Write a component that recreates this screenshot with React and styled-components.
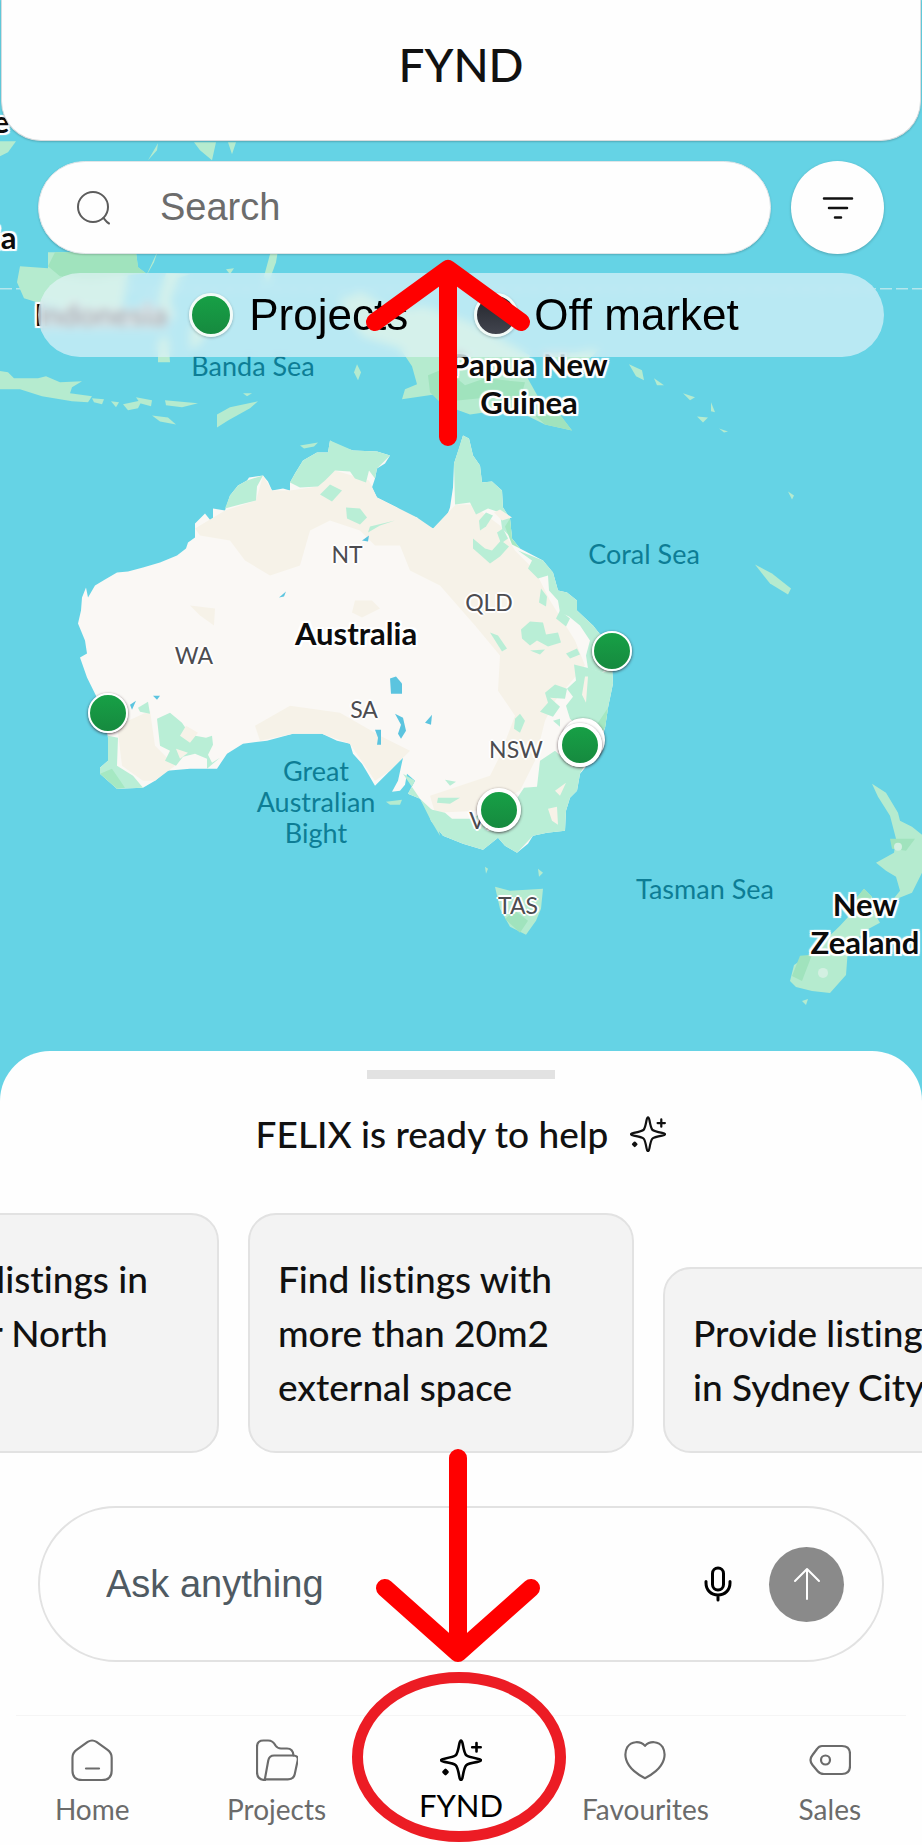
import React from 'react';
import styled, { createGlobalStyle } from 'styled-components';

const GlobalStyle = createGlobalStyle`
  *, *::before, *::after { box-sizing: border-box; }
  html, body { margin: 0; background: #fefefe; }
  body { font-family: Lato, "Open Sans", sans-serif; color: #111; font-variant-ligatures: none; }
  button, input { font: inherit; color: inherit; margin: 0; padding: 0; border: 0; background: none; }
  button { cursor: pointer; font-variant-ligatures: none; }
`;

const grotesque = '"Liberation Sans", Arial, sans-serif';

const Screen = styled.div`
  position: relative;
  display: flex;
  flex-direction: column;
  min-height: 100vh;
  overflow: hidden;
`;

const Stage = styled.section`
  position: relative;
  flex: 1 0 900px;
  background: #65d3e5;
`;

const MapCanvas = styled.div`
  position: absolute;
  inset: 0;
  overflow: hidden;
`;

const MapDrawing = styled.svg`
  display: block;
  width: 100%;
  height: 100%;
`;

const MAP_W = 922;
const MAP_H = 1100;
const pct = (n, total) => `${(n / total) * 100}%`;

const labelKinds = {
  country: `font-size: 31px; line-height: 38px; font-weight: 700; color: #0c0c0c;
    text-shadow: 2px 0 #fff, -2px 0 #fff, 0 2px #fff, 0 -2px #fff, 2px 2px 1px #fff, -2px 2px 1px #fff, 2px -2px 1px #fff, -2px -2px 1px #fff;`,
  region: `font-size: 23px; line-height: 28px; color: #4c4c50;
    text-shadow: 2px 0 #fff, -2px 0 #fff, 0 2px #fff, 0 -2px #fff, 0 0 3px #fff;`,
  sea: `font-size: 27px; line-height: 31px; color: #0d7d95;`,
};

const MapLabel = styled.span`
  position: absolute;
  left: ${(p) => pct(p.$x, MAP_W)};
  top: ${(p) => pct(p.$y, MAP_H)};
  transform: translate(-50%, -50%);
  white-space: pre;
  text-align: center;
  ${(p) => labelKinds[p.$kind]}
`;

const Pin = styled.button`
  position: absolute;
  left: ${(p) => pct(p.$x, MAP_W)};
  top: ${(p) => pct(p.$y, MAP_H)};
  width: ${(p) => (p.$stacked ? 44 : 40)}px;
  height: ${(p) => (p.$stacked ? 44 : 40)}px;
  transform: translate(-50%, -50%);
  border: ${(p) => (p.$stacked ? 4 : 2)}px solid #fff;
  border-radius: 50%;
  background: ${(p) => (p.$empty ? '#fff' : 'linear-gradient(#17a046, #168a3f)')};
  box-shadow: 0 1px 3px rgba(40, 20, 30, 0.75);
`;

const Overlay = styled.div`
  position: relative;
  display: flex;
  flex-direction: column;
`;

const Header = styled.header`
  margin: 0 1px;
  padding: 36px 0 47px;
  text-align: center;
  background: #fefefe;
  border: 1px solid #d8dcde;
  border-top: 0;
  border-radius: 0 0 40px 40px;
  box-shadow: 0 1px 2px rgba(0, 0, 0, 0.2);
`;

const PageTitle = styled.h1`
  margin: 0;
  font-size: 46px;
  line-height: 57px;
  font-weight: 500;
`;

const SearchRow = styled.form`
  display: flex;
  gap: 20px;
  margin: 20px 38px 0;
`;

const SearchBox = styled.label`
  flex: 1;
  min-width: 0;
  display: flex;
  align-items: center;
  gap: 48px;
  height: 93px;
  padding: 0 37px;
  border-radius: 47px;
  background: #fefefe;
  border: 1px solid #dfe5e8;
  box-shadow: 0 1px 2px rgba(0, 0, 0, 0.18);
`;

const TextInput = styled.input`
  flex: 1;
  min-width: 0;
  height: 60px;
  font-family: ${grotesque};
  font-size: 38px;
  outline: none;
  &::placeholder { color: ${(p) => p.$hint}; opacity: 1; }
`;

const FilterButton = styled.button`
  display: grid;
  place-items: center;
  width: 93px;
  height: 93px;
  border-radius: 50%;
  background: #fefefe;
  box-shadow: 0 1px 3px rgba(0, 0, 0, 0.22);
`;

const Legend = styled.div`
  display: flex;
  justify-content: center;
  align-items: center;
  gap: 66px;
  height: 84px;
  margin: 19px 38px 0;
  padding-left: 6px;
  border-radius: 42px;
  background: rgba(230, 245, 250, 0.65);
  backdrop-filter: blur(5px);
`;

const LegendItem = styled.span`
  display: flex;
  align-items: center;
  gap: 16px;
  font-family: ${grotesque};
  font-size: 44px;
  line-height: 52px;
  color: #000;
  white-space: nowrap;
`;

const LegendDot = styled.i`
  width: 44px;
  height: 44px;
  border: 3px solid #f3fbf8;
  border-radius: 50%;
  background: ${(p) => (p.$dark ? 'linear-gradient(#23252b, #42454f)' : 'linear-gradient(#17a046, #168a3f)')};
  box-shadow: 0 1px 3px rgba(0, 0, 0, 0.25);
`;

const Sheet = styled.section`
  position: relative;
  margin-top: -50px;
  padding-top: 19px;
  border-radius: 50px 50px 0 0;
  background: #fefefe;
`;

const Handle = styled.div`
  width: 188px;
  height: 9px;
  margin: 0 auto;
  background: #e2e2e2;
`;

const Ready = styled.h2`
  display: flex;
  justify-content: center;
  align-items: center;
  gap: 22px;
  margin: 31px 0 55px;
  font-size: 37px;
  line-height: 48px;
  font-weight: 500;
`;

const Suggestions = styled.div`
  display: flex;
  align-items: flex-end;
  gap: 29px;
  height: 240px;
  margin-left: -167px;
`;

const Suggestion = styled.button`
  flex: 0 0 386px;
  padding: 37px 28px;
  border: 2px solid #e2e2e2;
  border-radius: 28px;
  background: #f3f3f3;
  font-size: 37px;
  line-height: 54px;
  font-weight: 500;
  text-align: left;
  white-space: pre;
`;

const AskBar = styled.form`
  display: flex;
  align-items: center;
  height: 156px;
  margin: 53px 38px 53px;
  padding: 0 38px 0 66px;
  border: 2px solid #e2e2e2;
  border-radius: 78px;
`;

const MicButton = styled.button`
  display: grid;
  margin: 0 36px;
`;

const SendButton = styled.button`
  display: grid;
  place-items: center;
  width: 75px;
  height: 75px;
  border-radius: 50%;
  background: #8a8a8a;
`;

const Tabs = styled.nav`
  display: flex;
  padding: 24px 0 18px;
  position: relative;
  &::before {
    content: "";
    position: absolute;
    top: 0;
    left: 16px;
    right: 16px;
    border-top: 1px solid #f5f5f5;
  }
`;

const Tab = styled.a`
  flex: 1 1 0;
  display: flex;
  flex-direction: column;
  align-items: center;
  gap: ${(p) => (p.$active ? 6 : 10)}px;
  color: ${(p) => (p.$active ? '#000' : '#6b6b6b')};
  font-size: ${(p) => (p.$active ? 31 : 28)}px;
  line-height: 36px;
  text-decoration: none;
`;

const Marks = styled.svg`
  position: absolute;
  inset: 0;
  width: 100%;
  height: 100%;
  pointer-events: none;
`;

const Stroke = ({ size = 42, width = 2, children, ...rest }) => (
  <svg width={size} height={size} viewBox="0 0 42 42" fill="none" stroke="currentColor"
    strokeWidth={width} strokeLinecap="round" strokeLinejoin="round" aria-hidden="true" {...rest}>
    {children}
  </svg>
);

const Sparkle = ({ size }) => (
  <Stroke size={size} width={2.6}>
    <path d="M21 1.5C22 1.5 22.3 3 22.7 5C23.8 11 24.6 14.8 26.2 16.2C27.6 17.6 31.5 18.5 37.5 19.7C39.7 20.1 41 20.4 41 21.3C41 22.2 39.7 22.5 37.5 22.9C31.5 24 27.6 24.9 26.2 26.3C24.6 27.8 23.8 31.5 22.7 37.5C22.3 39.7 22 41 21 41C20 41 19.7 39.7 19.3 37.5C18.2 31.5 17.4 27.8 15.8 26.3C14.4 24.9 10.5 24 4.5 22.9C2.3 22.5 1 22.2 1 21.3C1 20.4 2.3 20.1 4.5 19.7C10.5 18.5 14.4 17.6 15.8 16.2C17.4 14.8 18.2 11 19.3 5C19.7 3 20 1.5 21 1.5Z" />
    <path d="M36.5 4V12.500M32.200 8.200H40.700" />
    <path d="M5.500 31L7.500 33L5.500 35L3.500 33Z" fill="currentColor" />
  </Stroke>
);

const HomeIcon = () => (
  <Stroke width={2.2}>
    <path d="M16.5 2.500Q21 -.5 25.500 2.500L36.500 10.300Q41 13.500 41 18.500V32Q41 41.500 31 41.500H11Q1 41.500 1 32V18.500Q1 13.500 5.500 10.300Z" transform="translate(.5 .5) scale(.98)" />
    <path d="M15 29.500H28" />
  </Stroke>
);

const FolderIcon = () => (
  <Stroke width={2.2}>
    <path d="M9 41Q1 41 1 33V8Q1 1.500 7.500 1.500H12Q17 1.500 19.500 6.500Q21.500 9.500 25 9.500H31Q37 9.500 37.500 16.500" />
    <path d="M8.500 41.200L12 22Q13 16.800 18 16.800H37.500Q43 16.800 42 22L39 36Q37.800 41.200 32 41.200Z" transform="translate(.5 0) scale(.98)" />
  </Stroke>
);

const HeartIcon = () => (
  <Stroke width={2.2}>
    <path d="M21 7C26 1.500 35 2.200 39 8.200C43.500 16.500 40 26 32 32.800Q26.500 37.500 21 40Q15.500 37.500 10 32.800C2 26 -1.500 16.500 3 8.200C7 2.200 16 1.500 21 7Z" transform="translate(.4 0) scale(.98)" />
  </Stroke>
);

const TagIcon = () => (
  <Stroke width={2.2}>
    <path d="M13 7H33Q41 7 41 15V27Q41 35 33 35H15Q11 35 8.500 32L3.500 26Q-.5 21 3.500 16L8 10Q10 7 13 7Z" />
    <circle cx="16.500" cy="21" r="4.500" />
  </Stroke>
);

const SearchIcon = () => (
  <svg width="36" height="36" viewBox="0 0 36 36" fill="none" stroke="#5c5c5c" strokeWidth="2" strokeLinecap="round" aria-hidden="true">
    <circle cx="17" cy="17" r="15" />
    <path d="M27.500 28C29 29.500 30 32 33 33.500" />
  </svg>
);

const FilterIcon = () => (
  <svg width="32" height="32" viewBox="0 0 32 32" stroke="#111" strokeWidth="2.500" strokeLinecap="round" aria-hidden="true">
    <path d="M2 6.500H30M7 16H25M13 25.500H19" />
  </svg>
);

const MicIcon = () => (
  <svg width="30" height="36" viewBox="0 0 30 36" fill="none" stroke="#000" strokeWidth="3" strokeLinecap="round" aria-hidden="true">
    <rect x="9.500" y="2" width="11" height="22" rx="5.500" />
    <path d="M3 15.500V17C3 24 8 29 15 29S27 24 27 17V15.500M15 29V34" />
  </svg>
);

const SendIcon = () => (
  <svg width="32" height="36" viewBox="0 0 32 36" fill="none" stroke="#fff" strokeWidth="2" strokeLinecap="round" strokeLinejoin="round" aria-hidden="true">
    <path d="M16 33V3M4 15L16 3L28 15" />
  </svg>
);

const australia =
  'M330 440L337 445L353 450L377 451L390 455L385 463L377 468L375 478L372 487L377 497L397 507L405 514L417 517L422 523L433 528L443 526L450 507L453 487L454 463L459 448L463 435L469 438L473 455L480 465L482 482L492 481L502 490L503 507L510 518L512 538L520 548L543 560L553 572L558 590L567 592L577 600L577 610L593 625L605 640L612 665L613 683L608 707L605 727L597 753L580 773L577 790L570 797L566 810L565 830L547 832L533 835L528 843L517 852L505 845L498 837L483 849L463 843L443 835L431 820L428 810L420 798L408 793L415 780L407 773L405 784L400 790L392 791L398 780L403 757L390 770L375 785L368 773L362 763L353 753L350 743L337 740L322 733L293 733L267 740L243 743L227 753L217 768L190 768L167 770L155 780L143 787L117 788L100 773L100 767L108 760L108 737L104 715L97 697L87 677L80 657L87 653L85 640L78 623L81 610L82 597L86 587L88 597L95 585L105 579L117 572L128 571L143 567L160 562L177 555L186 548L188 542L195 537L195 523L205 513L213 523L213 508L225 510L230 495L238 485L247 480L249 477L263 475L268 481L272 490L283 488L290 490L290 482L295 473L303 460L317 452L328 452Z';

const greens = [
  'M330 440L353 450L377 451L390 455L377 468L375 478L369 470L366 482L355 478L350 471L335 470L325 480L318 486L300 487L290 482L295 473L303 460L317 452L328 452Z',
  'M225 508L230 495L238 485L247 480L263 475L257 486L256 500L240 504Z',
  'M463 435L469 438L473 455L480 465L482 482L492 481L502 490L503 507L510 518L512 538L502 528L500 512L488 508L476 514L470 502L455 504L454 463Z',
  'M473 538L485 548L492 550L501 540L509 546L500 556L490 563L481 555L473 548Z',
  'M479 520L486 512L493 515L486 526L480 530Z',
  'M497 532L503 528L508 538L501 543Z',
  'M518 550L543 560L553 572L558 590L567 592L577 600L577 610L593 625L605 640L612 665L602 672L588 668L586 655L590 640L580 625L569 616L560 612L558 600L549 590L548 575L538 578L528 568L532 560Z',
  'M541 588L547 596L546 606L539 602Z',
  'M560 610L570 618L566 626L556 618Z',
  'M521 629L530 621L543 622L546 634L558 632L561 642L548 646L537 640L530 645L522 638Z',
  'M490 632L498 635L507 648L502 651Z',
  'M530 650L545 649L540 654Z',
  'M566 653L577 648L580 654L570 658Z',
  'M574 664L590 668L603 672L612 668L613 683L608 707L605 727L600 735L588 722L580 727L570 718L566 705L573 696L567 688L576 680Z',
  'M545 692L555 684L567 688L565 698L550 697L560 706L553 716L540 711L548 702Z',
  'M515 718L520 713L525 720L520 732L514 728Z',
  'M553 720L560 718L560 726Z',
  'M540 760L555 750L572 766L590 755L580 773L577 790L570 797L566 810L565 830L547 832L533 835L517 852L505 845L498 837L483 849L463 843L443 835L431 820L428 808L445 812L452 818L470 818L484 812L510 808L524 787L537 786Z',
  'M438 797L460 797L450 803L437 802Z',
  'M445 779L456 781L450 785Z',
  'M157 718L170 712L182 722L190 734L206 737L212 735L213 744L208 754L212 762L220 757L207 768L207 758L195 753L183 756L176 765L165 760L170 750L160 745Z',
  'M138 707L148 701L150 713L140 711Z',
  'M108 735L118 737L117 765L133 775L143 787L117 788L100 773L100 767L108 760Z',
  'M346 507L360 508L367 517L360 524L347 518Z',
  'M330 484L342 490L332 501L320 494Z',
  'M370 526L395 520L380 525L368 532Z',
  'M403 773L420 798L435 812L440 835L431 820L420 798L408 793L415 780Z',
];

const beiges = [
  'M225 510L256 500L263 475L272 490L290 490L318 486L335 470L369 480L377 497L417 517L433 528L450 510L456 504L472 504L500 525L515 550L535 570L550 600L575 640L585 665L555 700L545 720L535 760L520 790L480 810L435 812L430 795L490 775L500 755L515 715L498 690L500 655L475 625L440 585L410 570L400 545L375 545L360 530L330 520L310 530L300 565L270 575L245 560L230 540L200 535L195 528Z',
  'M117 725L150 710L155 745L175 765L155 780L143 780L122 765Z',
  'M255 725L290 705L340 712L380 735L410 750L403 757L390 770L375 780L350 743L322 733L293 733L260 740Z',
  'M355 600L372 600L380 608L362 617L352 612Z',
  'M190 605L215 608L214 625L200 615Z',
];

const isles = [
  'M-5 370L8 372L14 378L38 378L46 376L60 382L82 381L72 387L70 393L92 396L88 402L72 401L42 396L20 389L-5 389Z',
  'M92 398L104 399L102 404L94 402Z',
  'M111 401L119 402L116 407Z',
  'M123 404L142 400L138 408L128 410Z',
  'M136 397L152 400L151 406L140 403Z',
  'M165 400L198 403L182 407L166 405Z',
  'M152 415L168 417L176 424L160 421Z',
  'M217 414L230 407L258 401L250 408L228 420L217 427Z',
  'M243 393L252 393L247 396Z',
  'M357 364L361 372L358 380L354 372Z',
  'M17 282L20 266L48 268L48 252L136 252L138 267L146 273L128 274L124 300L116 320L94 328L70 310L40 303L24 298Z',
  'M166 273L190 274L178 278L170 300L176 318L166 320L158 300Z',
  'M158 340L168 335L170 362L158 362Z',
  'M264 276L270 254L278 250L276 262L268 284Z',
  'M226 269L234 268L230 274Z',
  'M190 326L208 328L200 344L190 350Z',
  'M338 300L362 292L392 310L425 306L470 322L512 345L530 355L526 375L540 400L558 412L572 430L545 424L520 412L500 410L470 414L442 404L436 394L402 399L405 389L417 384L412 366L400 348L362 336L350 318Z',
  'M545 352L575 352L600 348L590 358L560 362Z',
  'M629 364L642 370L644 380L636 376Z',
  'M654 378L664 385L657 385Z',
  'M683 393L695 397L690 400Z',
  'M711 402L715 412L711 411Z',
  'M697 416L708 417L703 422Z',
  'M719 428L728 431L724 432Z',
  'M755 564L772 573L791 588L788 594L770 583Z',
  'M788 491L794 495L792 499Z',
  'M300 445L318 442L314 446L304 448Z',
  'M386 801L402 799L400 804L390 804Z',
  'M145 278L158 250L154 262Z',
  'M0 141L16 141L8 152L0 156Z',
  'M148 160L158 143L157 150ZM194 142L216 142L212 160L200 150ZM228 142L236 142L232 154Z',
  'M495 886L510 890L543 888L541 908L536 920L526 934L510 926L500 908Z',
  'M538 868L543 872L539 876ZM485 866L488 868L486 873Z',
  'M872 783L886 792L898 812L900 820L912 826L922 834L922 872L912 892L892 900L900 890L896 876L886 870L876 862L894 852L896 838L890 815L878 796Z',
  'M856 898L864 888L872 896L872 908L880 922L865 930L848 948L846 974L830 992L812 990L796 986L790 980L794 964L812 952L840 925L852 912Z',
  'M802 1000L808 998L806 1004Z',
];

const waters = [
  'M390 678L396 676L402 683L402 693L391 693Z',
  'M395 713L403 717L406 730L401 738L398 733L401 724Z',
  'M375 729L381 729L381 744L377 744L378 737Z',
  'M425 722L432 714L431 724Z',
  'M279 597L286 591L284 596Z',
  'M362 540L369 535L368 541Z',
  'M153 695L160 695L157 699ZM130 704L136 700L132 709Z',
];

const labels = [
  ['country', 101, 314, 'Indonesia'],
  ['country', 529, 383, 'Papua New\nGuinea'],
  ['country', 356, 632, 'Australia'],
  ['country', 865, 922, 'New\nZealand'],
  ['country', 1, 121, 'e'],
  ['country', -44, 237, 'Malaysia'],
  ['region', 347, 553, 'NT'],
  ['region', 194, 654, 'WA'],
  ['region', 364, 708, 'SA'],
  ['region', 489, 601, 'QLD'],
  ['region', 516, 748, 'NSW'],
  ['region', 488, 819, 'VIC'],
  ['region', 518, 904, 'TAS'],
  ['sea', 253, 365, 'Banda Sea'],
  ['sea', 644, 552, 'Coral Sea'],
  ['sea', 705, 887, 'Tasman Sea'],
  ['sea', 316, 800, 'Great\nAustralian\nBight'],
];

const pins = [
  { name: 'Perth', x: 108, y: 712 },
  { name: 'Brisbane', x: 612, y: 650 },
  { name: 'Newcastle', x: 583, y: 739, stacked: true, empty: true },
  { name: 'Sydney', x: 580, y: 744, stacked: true },
  { name: 'Melbourne', x: 499, y: 809, stacked: true },
];

const suggestions = [
  'Provide listings in\nin Lower North\nShore',
  'Find listings with\nmore than 20m2\nexternal space',
  'Provide listings\nin Sydney City',
];

const tabs = [
  ['Home', HomeIcon],
  ['Projects', FolderIcon],
  ['FYND', Sparkle],
  ['Favourites', HeartIcon],
  ['Sales', TagIcon],
];

const RegionMap = () => (
  <MapCanvas>
    <MapDrawing viewBox={`0 0 ${MAP_W} ${MAP_H}`} preserveAspectRatio="none" aria-hidden="true">
      <path d="M0 288.500H922" stroke="#b5e6ec" strokeWidth="1.500" strokeDasharray="12 4" />
      <g fill="#b5ebcf">
        {isles.map((d) => <path key={d} d={d} />)}
      </g>
      <g fill="#a0e3bd">
        <path d="M48 266L55 252L136 252L138 267L146 273L90 280L60 276Z" />
        <path d="M428 375L445 368L465 385L485 378L525 382L520 400L480 398L440 402L430 392Z" />
        <path d="M535 415L558 412L572 430L545 424Z" />
        <path d="M792 975L800 955L812 954L802 980ZM856 898L864 888L872 896L860 905ZM890 838L915 838L906 850L892 848Z" />
        <path d="M505 918L515 910L528 920L520 932Z" />
      </g>
      <path d={australia} fill="#faf8f5" />
      <g fill="#f6f2e8">{beiges.map((d) => <path key={d} d={d} />)}</g>
      <g fill="#b9eed6">{greens.map((d) => <path key={d} d={d} />)}</g>
      <g fill="#a5e8c2">
        <path d="M510 518L512 538L520 548L512 544L505 526ZM608 707L605 727L600 735L596 725ZM100 773L112 768L125 787L117 788Z" />
      </g>
      <g fill="#f7f2e8">
        <path d="M548 808L557 806L558 824L552 820ZM512 517L502 520L494 512L500 509ZM585 676L588 676L586 702L582 694ZM555 790L566 782L560 795ZM186 725L198 732L190 742L180 735ZM176 748L188 752L180 758Z" />
      </g>
      <g fill="#d3f0e2">
        <circle cx="823" cy="972" r="5" />
        <circle cx="898" cy="846" r="4" />
      </g>
      <g fill="#5bc4df">{waters.map((d) => <path key={d} d={d} />)}</g>
    </MapDrawing>
    {labels.map(([kind, x, y, text]) => (
      <MapLabel key={text} $kind={kind} $x={x} $y={y}>{text}</MapLabel>
    ))}
    {pins.map((p) => (
      <Pin key={p.name} type="button" aria-label={p.name} $x={p.x} $y={p.y} $stacked={p.stacked} $empty={p.empty} />
    ))}
  </MapCanvas>
);

export default function App() {
  return (
    <Screen>
      <GlobalStyle />
      <Stage>
        <RegionMap />
        <Overlay>
          <Header><PageTitle>FYND</PageTitle></Header>
          <SearchRow>
            <SearchBox>
              <SearchIcon />
              <TextInput type="search" placeholder="Search" aria-label="Search" $hint="#6c6c6c" />
            </SearchBox>
            <FilterButton type="button" aria-label="Filter"><FilterIcon /></FilterButton>
          </SearchRow>
          <Legend>
            <LegendItem><LegendDot />Projects</LegendItem>
            <LegendItem><LegendDot $dark />Off market</LegendItem>
          </Legend>
        </Overlay>
      </Stage>
      <Sheet>
        <Handle />
        <Ready>FELIX is ready to help <Sparkle size={36} /></Ready>
        <Suggestions>
          {suggestions.map((s) => <Suggestion key={s} type="button">{s}</Suggestion>)}
        </Suggestions>
        <AskBar>
          <TextInput type="text" placeholder="Ask anything" aria-label="Ask anything" $hint="#4f5a62" />
          <MicButton type="button" aria-label="Dictate"><MicIcon /></MicButton>
          <SendButton type="button" aria-label="Send"><SendIcon /></SendButton>
        </AskBar>
        <Tabs>
          {tabs.map(([name, Icon]) => (
            <Tab key={name} href={`#${name.toLowerCase()}`} $active={name === 'FYND'}>
              <Icon />
              {name}
            </Tab>
          ))}
        </Tabs>
      </Sheet>
      <Marks viewBox="0 0 922 1845" preserveAspectRatio="none" fill="none" strokeLinecap="round" strokeLinejoin="round" aria-hidden="true">
        <path d="M448 437V269M375 322L448 269L521 322" stroke="#f00" strokeWidth="18" />
        <path d="M458 1458V1653M385 1588L458 1653L531 1588" stroke="#f00" strokeWidth="18" />
        <ellipse cx="459" cy="1757" rx="101.500" ry="79.500" stroke="#ec1c24" strokeWidth="11" />
      </Marks>
    </Screen>
  );
}
